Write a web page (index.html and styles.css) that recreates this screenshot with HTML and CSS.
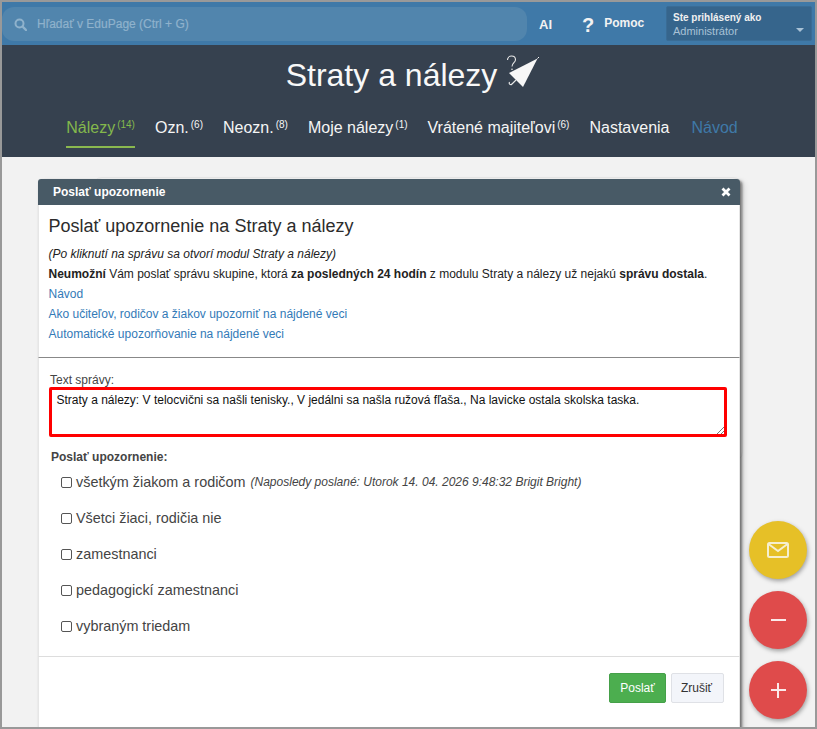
FILE: index.html
```html
<!DOCTYPE html>
<html lang="sk">
<head>
    <meta charset="UTF-8">
    <meta name="viewport" content="width=device-width, initial-scale=1.0">
    <title>Straty a nálezy</title>
    <link rel="stylesheet" href="styles.css">
</head>
<body>
    <div class="frame">
        <div class="topbar">
            <div class="search">
                <svg class="search-icon" width="13" height="13" viewBox="0 0 13 13"><circle cx="5.5" cy="5.5" r="4" fill="none" stroke="currentColor" stroke-width="2"/><path d="M8.5 8.5L12 12" stroke="currentColor" stroke-width="2.4" stroke-linecap="round"/></svg>
                <span>Hľadať v EduPage (Ctrl + G)</span>
            </div>
            <div class="top-ai">AI</div>
            <div class="top-help"><span class="qmark">?</span><span>Pomoc</span></div>
            <div class="user">
                <div class="user-label">Ste prihlásený ako</div>
                <div class="user-role">Administrátor</div>
                <span class="user-caret"></span>
            </div>
        </div>

        <div class="header">
            <div class="title">
                <span>Straty a nálezy</span>
                <svg class="title-icon" width="36" height="36" viewBox="0 0 36 36">
                    <path d="M4.5 7C4.5 4.5 6.5 3 8.5 3C11 3 12.5 4.8 12.5 6.8C12.5 9.5 9 10 9 13.5" fill="none" stroke="#e8e8e8" stroke-width="1.1"/>
                    <circle cx="9" cy="16.3" r="0.8" fill="#e8e8e8"/>
                    <path d="M34.5 5.5L6 20L20 34Z" fill="#f7f7f7"/>
                    <path d="M34.5 5.5L36 4" stroke="#f7f7f7" stroke-width="1"/>
                    <path d="M13 27L9 31C7.5 32.5 5.5 31 6.5 29" fill="none" stroke="#e8e8e8" stroke-width="1.1"/>
                </svg>
            </div>
            <nav class="tabs">
                <a class="tab tab-active">Nálezy<sup>(14)</sup></a>
                <a class="tab">Ozn.<sup>(6)</sup></a>
                <a class="tab">Neozn.<sup>(8)</sup></a>
                <a class="tab">Moje nálezy<sup>(1)</sup></a>
                <a class="tab">Vrátené majiteľovi<sup>(6)</sup></a>
                <a class="tab">Nastavenia</a>
                <a class="tab tab-link">Návod</a>
            </nav>
        </div>

        <div class="content">
            <div class="back-card"></div>
            <div class="dialog">
                <div class="dialog-head">
                    <span>Poslať upozornenie</span>
                    <svg class="close" width="10" height="10" viewBox="0 0 10 10"><path d="M1.5 1.5L8.5 8.5M8.5 1.5L1.5 8.5" stroke="#fff" stroke-width="2.8"/></svg>
                </div>
                <div class="intro">
                    <h2>Poslať upozornenie na Straty a nálezy</h2>
                    <p><em>(Po kliknutí na správu sa otvorí modul Straty a nálezy)</em></p>
                    <p><strong>Neumožní</strong> Vám poslať správu skupine, ktorá <strong>za posledných 24 hodín</strong> z modulu Straty a nálezy už nejakú <strong>správu dostala</strong>.</p>
                    <p><a>Návod</a></p>
                    <p><a>Ako učiteľov, rodičov a žiakov upozorniť na nájdené veci</a></p>
                    <p><a>Automatické upozorňovanie na nájdené veci</a></p>
                </div>
                <div class="form">
                    <label class="msg-label">Text správy:</label>
                    <div class="msg-box">Straty a nálezy: V telocvični sa našli tenisky., V jedálni sa našla ružová fľaša., Na lavicke ostala skolska taska.
                        <svg class="grip" width="8" height="8" viewBox="0 0 8 8"><path d="M8 1L1 8M8 5L5 8" stroke="#777" stroke-width="1"/></svg>
                    </div>
                    <div class="send-label">Poslať upozornenie:</div>
                    <label class="opt"><span class="check"></span>všetkým žiakom a rodičom <em>(Naposledy poslané: Utorok 14. 04. 2026 9:48:32 Brigit Bright)</em></label>
                    <label class="opt"><span class="check"></span>Všetci žiaci, rodičia nie</label>
                    <label class="opt"><span class="check"></span>zamestnanci</label>
                    <label class="opt"><span class="check"></span>pedagogickí zamestnanci</label>
                    <label class="opt"><span class="check"></span>vybraným triedam</label>
                </div>
                <div class="actions">
                    <button class="btn btn-send">Poslať</button>
                    <button class="btn btn-cancel">Zrušiť</button>
                </div>
            </div>
        </div>

        <div class="fab fab-mail">
            <svg width="22" height="16" viewBox="0 0 22 16"><rect x="1" y="1" width="20" height="14" rx="1.5" fill="none" stroke="#f6efcf" stroke-width="2"/><path d="M1.5 2L11 9L20.5 2" fill="none" stroke="#f6efcf" stroke-width="2"/></svg>
        </div>
        <div class="fab fab-minus"><span class="minus"></span></div>
        <div class="fab fab-plus"><span class="plus"></span></div>
    </div>
</body>
</html>
```

FILE: styles.css
```css
* {
    box-sizing: border-box;
}
body {
    margin: 0;
    font-family: "Liberation Sans", Arial, sans-serif;
    font-size: 12px;
    color: #222;
}
.frame {
    position: relative;
    width: 817px;
    height: 729px;
    border: 2px solid #999;
    overflow: hidden;
    background: #f2f2f2;
    display: flex;
    flex-direction: column;
}

/* top bar */
.topbar {
    height: 43px;
    flex: none;
    background: #3f79a8;
    display: flex;
    align-items: flex-start;
}
.search {
    width: 525px;
    height: 34px;
    margin-top: 5px;
    background: #5185ad;
    border-radius: 12px;
    color: #8fb2cc;
    display: flex;
    align-items: center;
    padding-left: 12px;
    gap: 10px;
    font-size: 12px;
    font-weight: bold;
}
.search span {
    font-weight: normal;
    -webkit-text-stroke: 0.2px #8fb2cc;
}
.search-icon {
    flex: none;
}
.top-ai {
    margin: 15px 0 0 12px;
    width: 43px;
    color: #f2f2f2;
    font-size: 13px;
    font-weight: bold;
}
.top-help {
    display: flex;
    color: #f2f2f2;
    font-size: 12px;
    font-weight: bold;
    width: 84px;
    margin-top: 14px;
}
.qmark {
    font-size: 20px;
    line-height: 18px;
    margin-right: 10px;
}
.user {
    position: relative;
    width: 146px;
    height: 35px;
    margin-top: 4px;
    background: #36658c;
    border: 1px solid #3a6c95;
    border-radius: 2px;
    padding: 4px 6px;
}
.user-label {
    color: #f0f0f0;
    font-size: 10px;
    font-weight: bold;
    line-height: 13px;
}
.user-role {
    color: #a9c2d6;
    font-size: 11px;
    line-height: 13px;
    margin-top: 1px;
}
.user-caret {
    position: absolute;
    right: 7px;
    bottom: 8px;
    border-left: 4px solid transparent;
    border-right: 4px solid transparent;
    border-top: 4px solid #a9c2d6;
}

/* dark header */
.header {
    height: 112px;
    flex: none;
    background: #36414f;
    color: #fff;
}
.title {
    display: flex;
    justify-content: center;
    align-items: flex-start;
    font-size: 32px;
    line-height: 37px;
    padding-top: 12px;
    padding-left: 8px;
    color: #f8f8f8;
}
.title-icon {
    margin: -4px 0 0 6px;
}
.tabs {
    display: flex;
    justify-content: center;
    gap: 20px;
    margin-top: 18px;
    padding-right: 13px;
}
.tab {
    font-size: 16px;
    line-height: 20px;
    color: #f5f5f5;
    padding: 6px 0 8px;
    white-space: nowrap;
}
.tab sup {
    font-size: 10px;
    line-height: 0;
    vertical-align: 5px;
    margin-left: 2px;
}
.tab-active {
    color: #84b84c;
    border-bottom: 2px solid #8ab84f;
}
.tab-link {
    color: #3f79a8;
    margin-left: 2px;
}

/* dialog */
.content {
    position: relative;
    flex: 1;
    min-height: 0;
    padding: 22px 0 0 36px;
}
.back-card {
    position: absolute;
    top: 20px;
    left: 90px;
    width: 651px;
    height: 285px;
    background: #f5f5f5;
    border: 1px solid #e6e6e6;
    border-radius: 10px;
}
.dialog {
    position: relative;
    width: 702px;
    height: 560px;
    background: #fff;
    border-radius: 3px 3px 0 0;
    box-shadow: 2px 2px 3px rgba(0, 0, 0, 0.5), 4px 3px 6px rgba(0, 0, 0, 0.12);
}
.dialog-head {
    height: 26px;
    background: #485a66;
    border-radius: 3px 3px 0 0;
    color: #fff;
    font-size: 12px;
    font-weight: bold;
    padding: 0 9px 0 15px;
    display: flex;
    align-items: center;
    justify-content: space-between;
}
.intro,
.form,
.actions {
    border-left: 1px solid #e6e6e6;
    border-right: 1px solid #e6e6e6;
}
.intro {
    padding: 11px 10px 13px 9.5px;
    border-bottom: 1px solid #888;
    height: 153px;
}
.intro h2 {
    margin: 0 0 8px;
    font-size: 18px;
    font-weight: normal;
    line-height: 20px;
    color: #2c2c2c;
}
.intro p {
    margin: 0;
    line-height: 20px;
    color: #222;
}
.intro a {
    color: #337ab7;
}
.form {
    padding: 15px 12px 0 11px;
    height: 299px;
    border-bottom: 1px solid #ddd;
}
.msg-label {
    display: block;
    color: #444;
    line-height: 14px;
}
.msg-box {
    position: relative;
    height: 50px;
    margin-left: -1px;
    border: 3px solid #f00;
    border-radius: 2px;
    padding: 0 4.5px;
    color: #111;
    line-height: 20px;
    background: #fff;
}
.grip {
    position: absolute;
    right: 0;
    bottom: 0;
}
.send-label {
    margin: 12px 0 0 1px;
    font-weight: bold;
    color: #444;
    line-height: 16px;
}
.opt {
    display: flex;
    align-items: center;
    height: 36px;
    padding-left: 11px;
    font-size: 14.4px;
    color: #444;
    white-space: pre;
}
.send-label + .opt {
    margin-top: -1px;
}
.opt em {
    font-size: 12px;
    margin-left: 1px;
}
.check {
    width: 11px;
    height: 11px;
    border: 1px solid #555;
    border-radius: 2px;
    background: #fff;
    margin-right: 4px;
    flex: none;
}
.actions {
    display: flex;
    justify-content: flex-end;
    align-items: flex-start;
    gap: 5px;
    height: 82px;
    padding: 16px 15px 0;
}
.btn {
    height: 30px;
    border-radius: 2px;
    font-family: inherit;
    font-size: 12px;
    padding: 0;
}
.btn-send {
    width: 57px;
    background: #4cae4f;
    border: 1px solid #45a049;
    color: #fff;
}
.btn-cancel {
    width: 53px;
    padding-right: 2px;
    background: #f3f5fa;
    border: 1px solid #dfe1e6;
    color: #333;
}

/* round buttons on the right */
.fab {
    position: absolute;
    left: 747px;
    width: 58px;
    height: 58px;
    border-radius: 50%;
    box-shadow: 1px 2px 4px rgba(0, 0, 0, 0.35);
    display: flex;
    align-items: center;
    justify-content: center;
}
.fab-mail {
    top: 519px;
    background: #e6c027;
}
.fab-minus {
    top: 589px;
    background: #df4b4b;
}
.fab-plus {
    top: 659px;
    background: #df4b4b;
}
.minus {
    width: 15px;
    height: 2px;
    background: #fbeaea;
}
.plus {
    position: relative;
    width: 15px;
    height: 2px;
    background: #fbeaea;
}
.plus::after {
    content: "";
    position: absolute;
    left: 6.5px;
    top: -6.5px;
    width: 2px;
    height: 15px;
    background: #fbeaea;
}
```
